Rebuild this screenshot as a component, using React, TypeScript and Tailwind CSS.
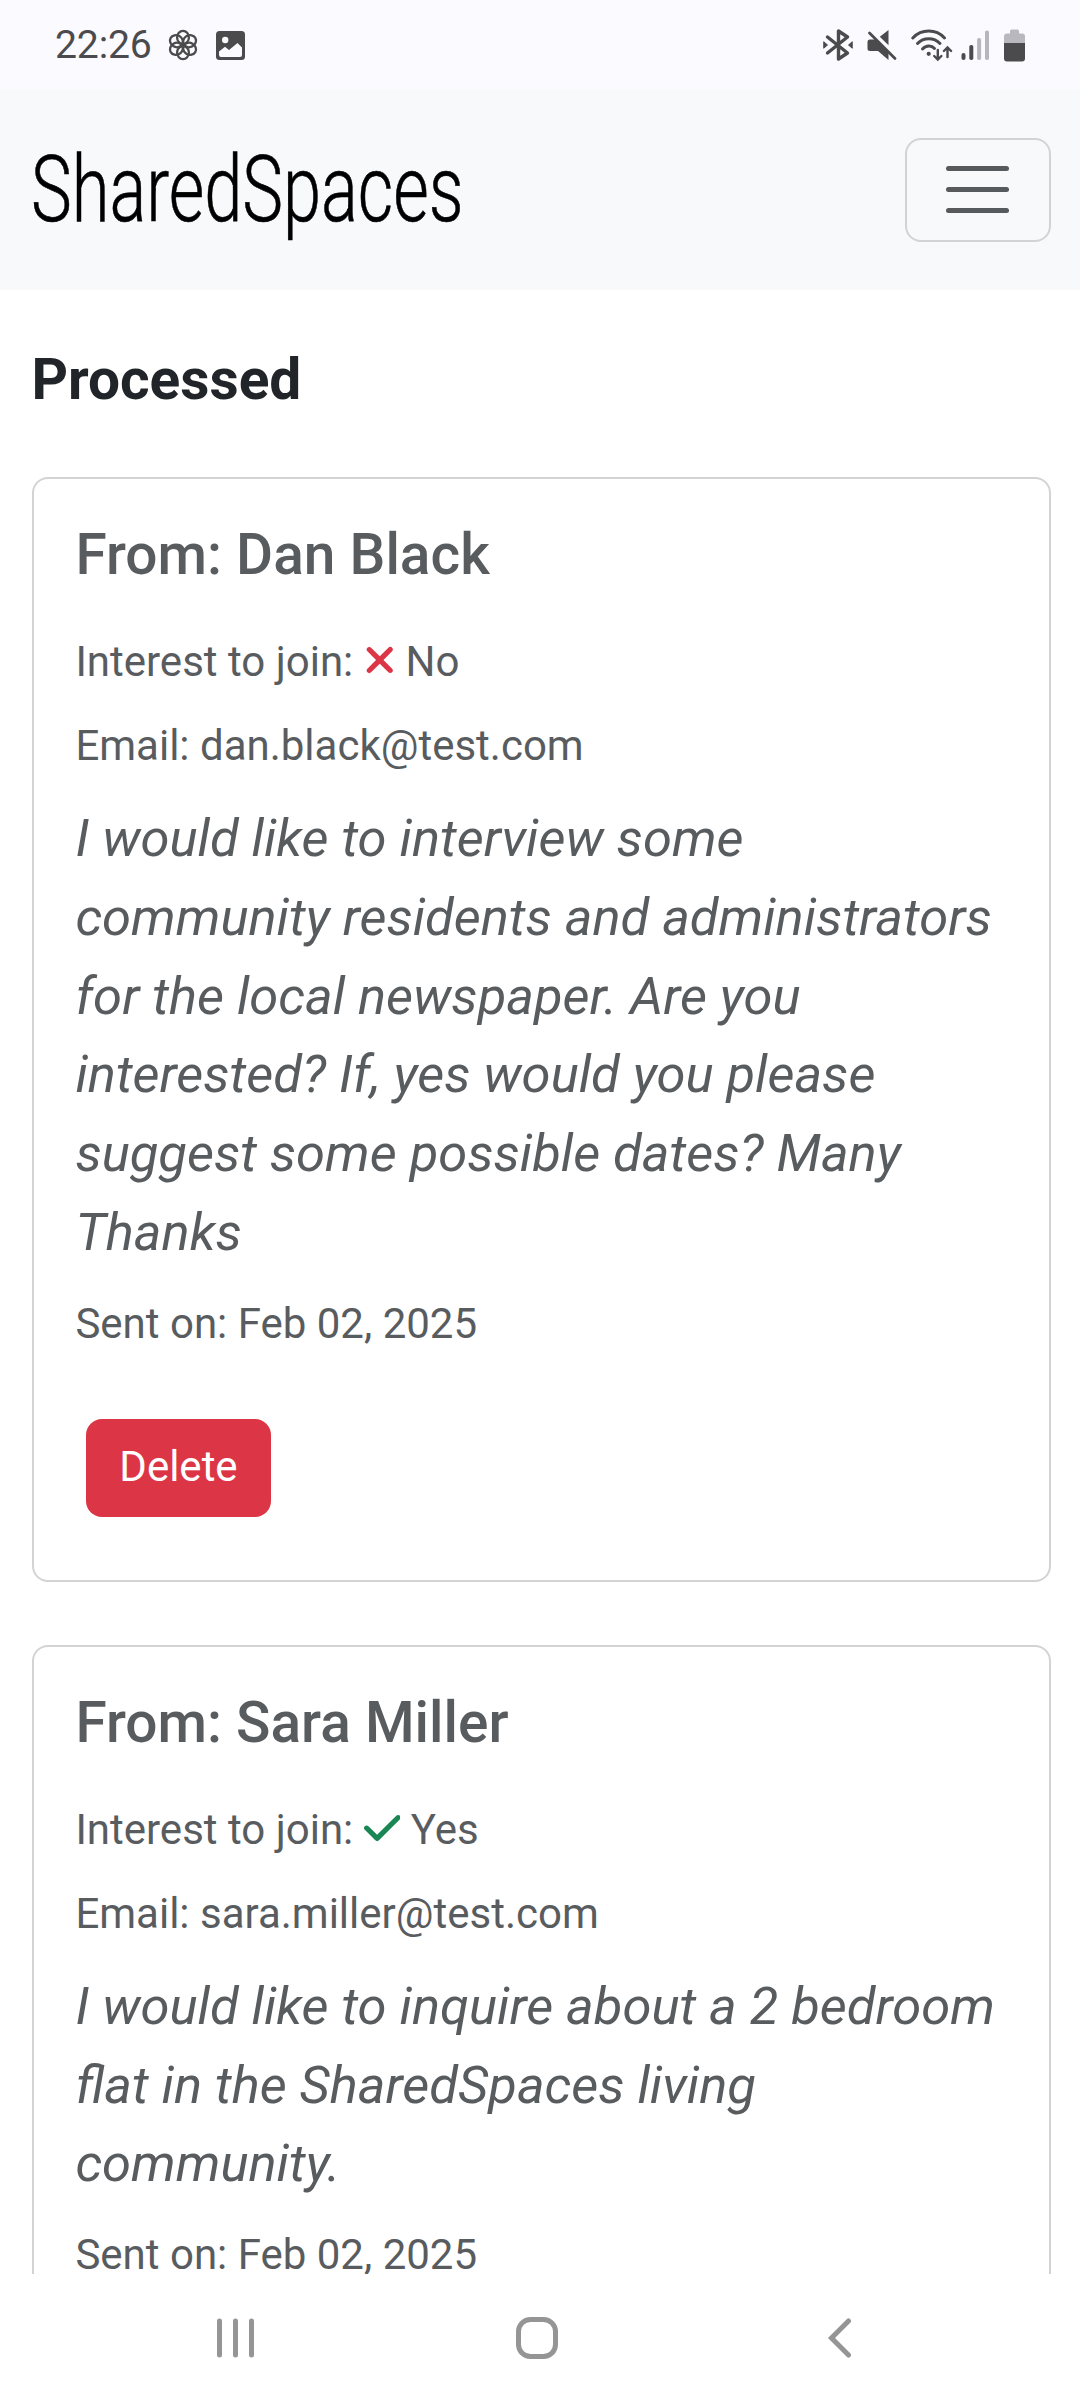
import React from "react";
import { FaCheck, FaXmark } from "react-icons/fa6";

const INK = "#4b4b4d";

function FlowerIcon() {
  return (
    <svg width="30" height="32" viewBox="-15 -16 30 32" fill="none" stroke={INK} strokeWidth="2.3">
      {[0, 60, 120, 180, 240, 300].map((a) => (
        <ellipse key={a} cx="0" cy="-7.6" rx="5.9" ry="6.6" transform={`rotate(${a})`} />
      ))}
    </svg>
  );
}

function PictureIcon() {
  return (
    <svg width="29" height="29" viewBox="0 0 29 29">
      <rect width="29" height="29" rx="3.5" fill={INK} />
      <circle cx="9.2" cy="9" r="3.2" fill="#fbfaff" />
      <path d="M3 20.5 L9 15.8 L13 19 L21.5 12 L26 16.5 V24 Q26 26 24 26 H5 Q3 26 3 24 Z" fill="#fbfaff" />
    </svg>
  );
}

function BluetoothIcon() {
  return (
    <svg width="30" height="34" viewBox="0 0 30 34" fill="none" stroke={INK} strokeWidth="3.4" strokeLinecap="round" strokeLinejoin="round">
      <path d="M4.5 9 L24.5 25 L15.5 31 V3 L24.5 9 L4.5 25" />
      <path d="M1 14 L4.5 17 L1 20 Z M29 14 L25.5 17 L29 20 Z" fill={INK} strokeWidth="1" />
    </svg>
  );
}

function MuteIcon() {
  return (
    <svg width="30" height="34" viewBox="0 0 30 34">
      <path d="M21.5 2 V17.2 L12.8 8.8 Z" fill={INK} />
      <path d="M3 11.5 H8.5 L21.5 24 V32 L11 23 H3 Q0.5 23 0.5 20.5 V14 Q0.5 11.5 3 11.5 Z" fill={INK} />
      <path d="M2.5 5 L28 30.5" stroke={INK} strokeWidth="2.8" strokeLinecap="round" />
    </svg>
  );
}

function WifiIcon() {
  return (
    <svg width="42" height="34" viewBox="0 0 42 34" fill="none" stroke={INK} strokeWidth="3" strokeLinecap="round">
      <path d="M1.8 10 C10.5 0.8 25 0.8 33.5 10" />
      <path d="M6.5 15.5 C12.5 9 23 9 29 15.5" />
      <path d="M11.5 21 C15 17.2 20.5 17.2 23.5 20.5" />
      <circle cx="17.7" cy="25.8" r="2.1" fill={INK} stroke="none" />
      <path d="M26.8 22 V31 M23.2 28 L26.8 31.5 L30.4 28" strokeWidth="2.4" />
      <path d="M36.5 29 V20 M32.9 23 L36.5 19.5 L40.1 23" strokeWidth="2.4" />
    </svg>
  );
}

function SignalIcon() {
  return (
    <svg width="28" height="34" viewBox="0 0 28 34">
      <rect x="0.5" y="25" width="4" height="7" rx="2" fill={INK} />
      <rect x="8.3" y="17" width="4" height="15" rx="1.8" fill={INK} />
      <rect x="16.1" y="10" width="4" height="22" rx="1.8" fill="#b7b6bc" />
      <rect x="24" y="2.5" width="4" height="29.5" rx="1.8" fill="#b7b6bc" />
    </svg>
  );
}

function BatteryIcon() {
  return (
    <svg width="21" height="34" viewBox="0 0 21 34">
      <path d="M6 3 Q6 1.5 7.5 1.5 H13.5 Q15 1.5 15 3 V5.5 H18 Q21 5.5 21 8.5 V15 H0 V8.5 Q0 5.5 3 5.5 H6 Z" fill="#b9b8be" />
      <path d="M0 15 H21 V30.5 Q21 33.5 18 33.5 H3 Q0 33.5 0 30.5 Z" fill={INK} />
    </svg>
  );
}

type Request = {
  name: string;
  interested: boolean;
  email: string;
  message: string;
  sent: string;
};

const requests: Request[] = [
  {
    name: "Dan Black",
    interested: false,
    email: "dan.black@test.com",
    message:
      "I would like to interview some community residents and administrators for the local newspaper. Are you interested? If, yes would you please suggest some possible dates? Many Thanks",
    sent: "Feb 02, 2025",
  },
  {
    name: "Sara Miller",
    interested: true,
    email: "sara.miller@test.com",
    message: "I would like to inquire about a 2 bedroom flat in the SharedSpaces living community.",
    sent: "Feb 02, 2025",
  },
];

function RequestCard({ request, actions }: { request: Request; actions: boolean }) {
  return (
    <article className="rounded-[16px] border-2 border-[#d2d3d4] pt-[42px] pr-[42px] pb-[63px] pl-[41.4px] text-[42px] leading-[63px] text-[#595c5f]">
      <h2 className="mb-[41px] text-[56.8px] leading-[68px] font-medium">From: {request.name}</h2>
      <p className="mb-[21px] h-[63px] whitespace-nowrap">
        Interest to join:{" "}
        {request.interested ? (
          <FaCheck className="inline h-[42px] w-[36.75px] align-[-5.25px] text-[#198754]" />
        ) : (
          <FaXmark className="inline h-[42px] w-[31.5px] align-[-5.25px] text-[#dc3545]" />
        )}{" "}
        {request.interested ? "Yes" : "No"}
      </p>
      <p className="mb-[22px]">Email: {request.email}</p>
      <p className="mb-[20px] text-[52.5px] leading-[78.75px] italic">{request.message}</p>
      <p className="mb-[64px]">Sent on: {request.sent}</p>
      {actions && (
        <button className="ml-[10.6px] block h-[98px] w-[185px] rounded-[16px] bg-[#dc3545] pb-[2px] text-white">
          Delete
        </button>
      )}
    </article>
  );
}

export default function App() {
  return (
    <div className="flex h-[2400px] w-[1080px] flex-col overflow-hidden bg-white font-[Roboto,sans-serif]">
      <div className="flex h-[90px] shrink-0 items-center justify-between bg-[#fbfaff] pr-[55px] pl-[55px]">
        <div className="flex items-center">
          <span className="w-[113px] text-[39.2px] leading-[46px] tracking-[-0.2px] text-[#4b4b4d]">22:26</span>
          <FlowerIcon />
          <span className="ml-[18px]">
            <PictureIcon />
          </span>
        </div>
        <div className="flex items-center">
          <BluetoothIcon />
          <span className="ml-[14px]">
            <MuteIcon />
          </span>
          <span className="ml-[14px]">
            <WifiIcon />
          </span>
          <span className="ml-[8px]">
            <SignalIcon />
          </span>
          <span className="ml-[15px]">
            <BatteryIcon />
          </span>
        </div>
      </div>
      <header className="flex h-[200px] shrink-0 items-center justify-between bg-[#f8f9fb] pr-[29px] pl-[31px]">
        <span className="inline-block w-[430px] origin-left scale-x-[0.738] text-[93px] leading-[110px] font-light whitespace-nowrap text-black [-webkit-text-stroke:0.6px_black]">
          SharedSpaces
        </span>
        <button className="flex h-[104px] w-[146px] flex-col items-center justify-center gap-[16px] rounded-[16px] border-2 border-[#d2d3d5] pr-px pb-px">
          <span className="h-[5px] w-[63px] rounded-full bg-[#575a5c]" />
          <span className="h-[5px] w-[63px] rounded-full bg-[#575a5c]" />
          <span className="h-[5px] w-[63px] rounded-full bg-[#575a5c]" />
        </button>
      </header>
      <main className="h-[1984px] shrink-0 overflow-hidden pr-[29px] pl-[32px]">
        <h1 className="-ml-[0.6px] mt-[56px] mb-[63px] text-[56.8px] leading-[68px] font-bold text-[#212529]">Processed</h1>
        <div className="flex flex-col gap-[63.4px]">
          {requests.map((r, i) => (
            <RequestCard key={r.email} request={r} actions={i === 0} />
          ))}
        </div>
      </main>
      <nav className="flex h-[126px] shrink-0 items-center pt-px pl-[216px]">
        <svg width="40" height="44" viewBox="0 0 40 44" stroke="#959595" strokeWidth="5" strokeLinecap="round">
          <path d="M3.5 5 V39 M19.5 5 V39 M35.5 5 V39" />
        </svg>
        <svg className="ml-[259px]" width="44" height="44" viewBox="0 0 44 44" fill="none" stroke="#959595" strokeWidth="5">
          <rect x="3.5" y="3.5" width="37" height="37" rx="12" />
        </svg>
        <svg className="ml-[267px]" width="26" height="44" viewBox="0 0 26 44" fill="none" stroke="#959595" strokeWidth="5" strokeLinecap="round">
          <path d="M22.5 5 L5.5 22 L22.5 39" />
        </svg>
      </nav>
    </div>
  );
}
